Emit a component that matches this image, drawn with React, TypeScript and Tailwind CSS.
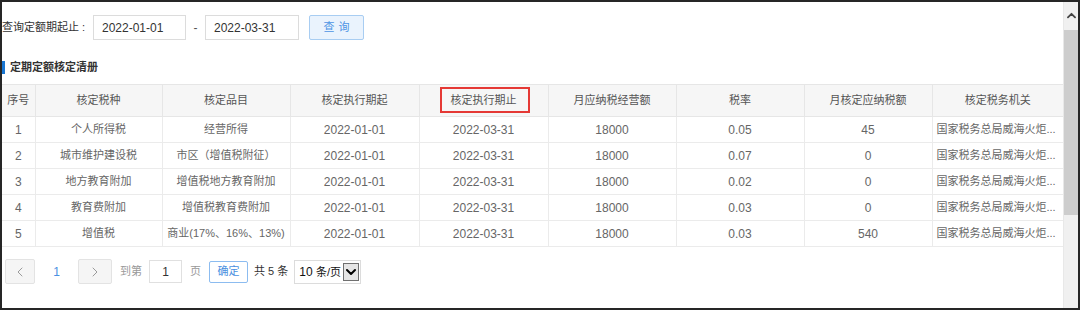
import React from "react";

const rows = [
  ["1", "个人所得税", "经营所得", "2022-01-01", "2022-03-31", "18000", "0.05", "45"],
  ["2", "城市维护建设税", "市区（增值税附征）", "2022-01-01", "2022-03-31", "18000", "0.07", "0"],
  ["3", "地方教育附加", "增值税地方教育附加", "2022-01-01", "2022-03-31", "18000", "0.02", "0"],
  ["4", "教育费附加", "增值税教育费附加", "2022-01-01", "2022-03-31", "18000", "0.03", "0"],
  ["5", "增值税", "商业(17%、16%、13%)", "2022-01-01", "2022-03-31", "18000", "0.03", "540"],
];

const headers = ["序号", "核定税种", "核定品目", "核定执行期起", "核定执行期止", "月应纳税经营额", "税率", "月核定应纳税额", "核定税务机关"];
const widths = [33, 127, 128, 129, 129, 128, 128, 128, 131];

function Chevron({ dir, className }: { dir: "left" | "right" | "up" | "down"; className?: string }) {
  const pts =
    dir === "left" ? "6,1 2,5 6,9" : dir === "right" ? "2,1 6,5 2,9" : dir === "up" ? "1,6 5,2 9,6" : "1,3 5,7 9,3";
  const vb = dir === "left" || dir === "right" ? "0 0 8 10" : "0 0 10 9";
  return (
    <svg viewBox={vb} className={className} fill="none" stroke="currentColor">
      <polyline points={pts} strokeWidth={dir === "up" || dir === "down" ? 2 : 1} strokeLinecap="round" strokeLinejoin="round" />
    </svg>
  );
}

export default function App() {
  return (
    <div
      className="w-[1080px] h-[310px] border-2 border-[#262626] bg-white flex overflow-hidden text-[12px]"
      style={{ fontFamily: '"Liberation Sans", "Noto Sans CJK SC", sans-serif' }}
    >
      <div className="w-[1061px] flex flex-col">
        {/* query row */}
        <div className="mt-[13px] h-[25px] flex items-center">
          <span className="text-[11px] text-[#333] w-[88px] whitespace-nowrap">查询定额期起止 :</span>
          <div className="ml-[3px] w-[93px] h-[25px] border border-[#dcdcdc] pl-[8px] flex items-center text-[12px] text-[#333]">
            2022-01-01
          </div>
          <span className="w-[19px] text-center text-[#555]">-</span>
          <div className="w-[94px] h-[25px] border border-[#dcdcdc] pl-[8px] flex items-center text-[12px] text-[#333]">
            2022-03-31
          </div>
          <button className="ml-[10px] w-[55px] h-[25px] border border-[#a8cdf2] bg-[#eaf3fd] rounded-[2px] text-[11px] text-[#4d94e4] tracking-[4px] pl-[4px]">
            查询
          </button>
        </div>

        {/* section title */}
        <div className="mt-[21px] h-[13px] flex items-center">
          <div className="w-[3px] h-[13px] bg-[#1976d2]" />
          <span className="ml-[5px] text-[11px] font-bold text-[#333]">定期定额核定清册</span>
        </div>

        {/* table */}
        <table className="mt-[10px] border-collapse table-fixed w-[1061px]">
          <colgroup>
            {widths.map((w, i) => (
              <col key={i} style={{ width: w }} />
            ))}
          </colgroup>
          <thead>
            <tr className="h-[32px] bg-[#f6f6f6]">
              {headers.map((h, i) => (
                <th
                  key={i}
                  className={`relative font-normal text-[11px] text-[#555] border border-[#e6e6e6] ${i === 0 ? "border-l-0" : ""} ${i === 8 ? "border-r-0" : ""}`}
                >
                  {h}
                  {i === 4 && <div className="absolute left-[20px] top-[2px] w-[90px] h-[26px] border-2 border-[#e53935]" />}
                </th>
              ))}
            </tr>
          </thead>
          <tbody>
            {rows.map((r) => (
              <tr key={r[0]} className="h-[26px]">
                {r.map((c, i) => (
                  <td
                    key={i}
                    className={`text-center text-[#666] border border-[#ebebeb] whitespace-nowrap ${i === 0 ? "border-l-0" : ""} ${
                      i === 1 || i === 2 ? "text-[11px]" : "text-[12px]"
                    }`}
                  >
                    {c}
                  </td>
                ))}
                <td className="text-left pl-[4px] text-[11px] text-[#666] border border-[#ebebeb] border-r-0 whitespace-nowrap overflow-hidden">
                  国家税务总局威海火炬...
                </td>
              </tr>
            ))}
          </tbody>
        </table>

        {/* pagination */}
        <div className="mt-[12px] h-[25px] flex items-center">
          <div className="ml-[3px] w-[30px] h-[25px] border border-[#e3e3e3] bg-[#f5f5f5] rounded-[2px] flex items-center justify-center text-[#9a9a9a]">
            <Chevron dir="left" className="w-[8px] h-[10px]" />
          </div>
          <span className="w-[43px] text-center text-[12px] text-[#4a90e2]">1</span>
          <div className="w-[34px] h-[25px] border border-[#e3e3e3] bg-[#f5f5f5] rounded-[2px] flex items-center justify-center text-[#9a9a9a]">
            <Chevron dir="right" className="w-[8px] h-[10px]" />
          </div>
          <span className="ml-[8px] text-[11px] text-[#999]">到第</span>
          <div className="ml-[7px] w-[33px] h-[23px] border border-[#e0e0e0] flex items-center justify-center text-[12px] text-[#333]">1</div>
          <span className="ml-[8px] text-[11px] text-[#999]">页</span>
          <button className="ml-[8px] w-[39px] h-[22px] border border-[#8cbcf0] bg-white rounded-[2px] text-[11px] text-[#4a8fe0]">确定</button>
          <span className="ml-[6px] text-[11px] text-[#333] whitespace-nowrap">共 5 条</span>
          <div className="ml-[6px] w-[67px] h-[24px] border border-[#dcdcdc] flex items-center pl-[4px] text-[#111]">
            <span className="whitespace-nowrap">
              <span className="text-[12px]">10 </span>
              <span className="text-[11px]">条/页</span>
            </span>
            <div className="ml-auto mr-[1px] w-[16px] h-[18px] border border-[#707070] bg-[#e5e5e5] flex items-center justify-center text-black">
              <Chevron dir="down" className="w-[10px] h-[9px]" />
            </div>
          </div>
        </div>
      </div>

      {/* scrollbar */}
      <div className="flex-1 bg-[#f0f0f0] flex flex-col border-l border-[#e8e8e8]">
        <div className="h-[28px] flex items-center justify-center text-[#444]">
          <Chevron dir="up" className="w-[9px] h-[8px]" />
        </div>
        <div className="h-[185px] bg-[#cdcdcd]" />
      </div>
    </div>
  );
}
